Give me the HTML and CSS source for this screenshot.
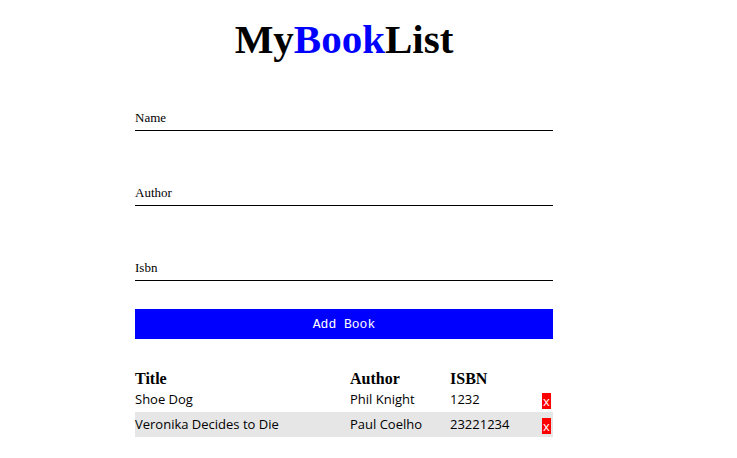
FILE: index.html
```html
<!DOCTYPE html>
<html lang="en">
<head>
<meta charset="utf-8">
<title>MyBookList</title>
<link rel="stylesheet" href="styles.css">
</head>
<body>
<main class="container">
  <h1 class="brand">My<span class="brand-accent">Book</span>List</h1>
  <form class="book-form">
    <div class="field"><label for="name">Name</label><input id="name" type="text"></div>
    <div class="field"><label for="author">Author</label><input id="author" type="text"></div>
    <div class="field"><label for="isbn">Isbn</label><input id="isbn" type="text"></div>
    <button class="submit" type="submit">Add Book</button>
  </form>
  <table class="books">
    <thead>
      <tr><th class="col-title">Title</th><th class="col-author">Author</th><th class="col-isbn">ISBN</th><th></th></tr>
    </thead>
    <tbody>
      <tr><td>Shoe Dog</td><td>Phil Knight</td><td>1232</td><td class="action"><a class="delete" href="#">x</a></td></tr>
      <tr><td>Veronika Decides to Die</td><td>Paul Coelho</td><td>23221234</td><td class="action"><a class="delete" href="#">x</a></td></tr>
    </tbody>
  </table>
</main>
</body>
</html>
```
FILE: styles.css
```css
* {
  box-sizing: border-box;
}

body {
  margin: 0;
  background: #fff;
  color: #000;
  font-family: "Baskerville Old Face", "Liberation Serif", serif;
}

.container {
  width: 418px;
  max-width: 100%;
  margin: 0 184px 0 auto;
}

.brand {
  margin: 0;
  padding-top: 15px;
  font-size: 41px;
  line-height: 48px;
  text-align: center;
}

.brand-accent {
  color: #00f;
}

.book-form {
  display: flex;
  flex-direction: column;
  padding-top: 37px;
}

.field {
  display: grid;
  height: 31px;
  margin-bottom: 44px;
  border-bottom: 1px solid #000;
}

.field label,
.field input {
  grid-area: 1 / 1;
}

.field label {
  align-self: end;
  padding-bottom: 4px;
  font-size: 13px;
  line-height: 16px;
}

.field input {
  width: 100%;
  padding: 0;
  border: 0;
  outline: 0;
  background: transparent;
  font: inherit;
}

.field:last-of-type {
  margin-bottom: 28px;
}

.submit {
  height: 30px;
  padding: 2px 0 0;
  border: 0;
  background: #00f;
  color: #fff;
  font: 13px/28px "Courier New", "Liberation Mono", monospace;
}

.books {
  width: 100%;
  margin-top: 32px;
  border-collapse: collapse;
  table-layout: fixed;
  font-family: "Comic Sans MS", "Open Sans", sans-serif;
  font-size: 13px;
}

.books th {
  height: 16px;
  padding: 0;
  font: bold 16px/16px "Baskerville Old Face", "Liberation Serif", serif;
  text-align: left;
}

.books td {
  height: 25px;
  padding: 0;
  line-height: 25px;
}

.col-title {
  width: 215px;
}

.col-author {
  width: 100px;
}

.col-isbn {
  width: 72px;
}

.books tbody tr:nth-child(even) {
  background: #e6e6e6;
}

.books .action {
  padding: 6px 2px 0 0;
  vertical-align: top;
}

.delete {
  display: block;
  width: 9px;
  margin-left: auto;
  background: #f00;
  color: #fff;
  line-height: 16px;
  text-align: center;
  text-decoration: none;
}
```
